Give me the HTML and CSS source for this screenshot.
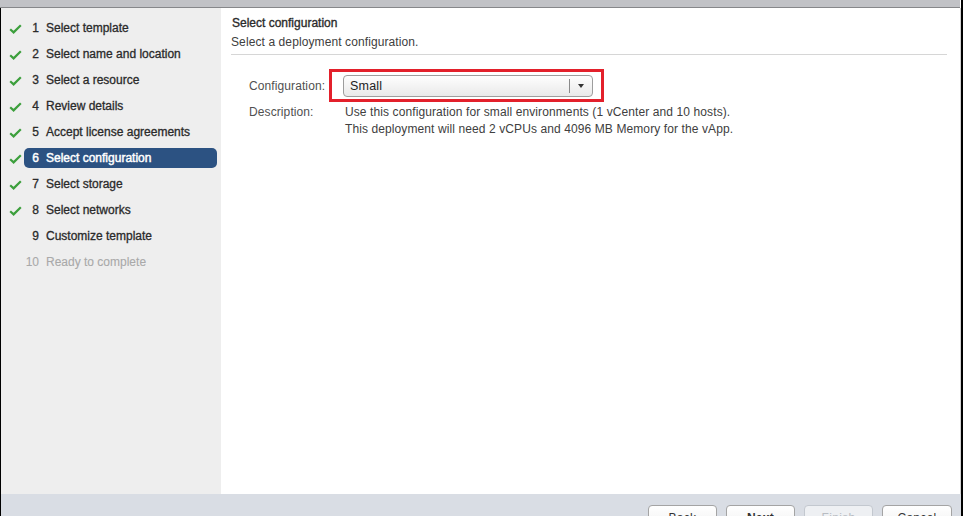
FILE: index.html
```html
<!DOCTYPE html>
<html lang="en">
<head>
<meta charset="utf-8">
<title>Deploy OVF Template - Select configuration</title>
<link rel="stylesheet" href="styles.css">
</head>
<body>
<div class="window">
  <div class="topbar"></div>
  <div class="main">
    <nav class="sidebar">
      <div class="row done"><span class="check"><svg width="13" height="10" viewBox="0 0 13 10"><path d="M1.2 5.2 L4.6 8.4 L11.8 1.2" fill="none" stroke="#3c9f3c" stroke-width="2.2"/></svg></span><div class="step"><span class="num">1</span><span class="label">Select template</span></div></div>
      <div class="row done"><span class="check"><svg width="13" height="10" viewBox="0 0 13 10"><path d="M1.2 5.2 L4.6 8.4 L11.8 1.2" fill="none" stroke="#3c9f3c" stroke-width="2.2"/></svg></span><div class="step"><span class="num">2</span><span class="label">Select name and location</span></div></div>
      <div class="row done"><span class="check"><svg width="13" height="10" viewBox="0 0 13 10"><path d="M1.2 5.2 L4.6 8.4 L11.8 1.2" fill="none" stroke="#3c9f3c" stroke-width="2.2"/></svg></span><div class="step"><span class="num">3</span><span class="label">Select a resource</span></div></div>
      <div class="row done"><span class="check"><svg width="13" height="10" viewBox="0 0 13 10"><path d="M1.2 5.2 L4.6 8.4 L11.8 1.2" fill="none" stroke="#3c9f3c" stroke-width="2.2"/></svg></span><div class="step"><span class="num">4</span><span class="label">Review details</span></div></div>
      <div class="row done"><span class="check"><svg width="13" height="10" viewBox="0 0 13 10"><path d="M1.2 5.2 L4.6 8.4 L11.8 1.2" fill="none" stroke="#3c9f3c" stroke-width="2.2"/></svg></span><div class="step"><span class="num">5</span><span class="label">Accept license agreements</span></div></div>
      <div class="row done"><span class="check"><svg width="13" height="10" viewBox="0 0 13 10"><path d="M1.2 5.2 L4.6 8.4 L11.8 1.2" fill="none" stroke="#3c9f3c" stroke-width="2.2"/></svg></span><div class="step active"><span class="num">6</span><span class="label">Select configuration</span></div></div>
      <div class="row done"><span class="check"><svg width="13" height="10" viewBox="0 0 13 10"><path d="M1.2 5.2 L4.6 8.4 L11.8 1.2" fill="none" stroke="#3c9f3c" stroke-width="2.2"/></svg></span><div class="step"><span class="num">7</span><span class="label">Select storage</span></div></div>
      <div class="row done"><span class="check"><svg width="13" height="10" viewBox="0 0 13 10"><path d="M1.2 5.2 L4.6 8.4 L11.8 1.2" fill="none" stroke="#3c9f3c" stroke-width="2.2"/></svg></span><div class="step"><span class="num">8</span><span class="label">Select networks</span></div></div>
      <div class="row"><span class="check"></span><div class="step"><span class="num">9</span><span class="label">Customize template</span></div></div>
      <div class="row"><span class="check"></span><div class="step disabled"><span class="num">10</span><span class="label">Ready to complete</span></div></div>
    </nav>
    <section class="content">
      <header class="header">
        <div class="title">Select configuration</div>
        <div class="subtitle">Select a deployment configuration.</div>
      </header>
      <div class="form">
        <div class="config-row">
          <span class="field-label config-label">Configuration:</span>
          <div class="highlight">
            <div class="select">
              <span class="select-value">Small</span>
              <span class="select-btn"><span class="arrow"></span></span>
            </div>
          </div>
        </div>
        <div class="desc-row">
          <span class="field-label desc-label">Description:</span>
          <div class="desc-text">
            <div>Use this configuration for small environments (1 vCenter and 10 hosts).</div>
            <div>This deployment will need 2 vCPUs and 4096 MB Memory for the vApp.</div>
          </div>
        </div>
      </div>
    </section>
  </div>
  <footer class="footer">
    <button class="btn">Back</button>
    <button class="btn primary">Next</button>
    <button class="btn" disabled>Finish</button>
    <button class="btn">Cancel</button>
  </footer>
</div>
</body>
</html>
```
FILE: styles.css
```css
* { box-sizing: border-box; }
html, body {
  margin: 0;
  padding: 0;
  width: 963px;
  height: 516px;
  overflow: hidden;
  background: #ffffff;
  font-family: "Liberation Sans", Arial, sans-serif;
  font-size: 12px;
}
.window {
  width: 963px;
  height: 516px;
  display: flex;
  flex-direction: column;
  border-right: 2px solid #000;
  background: #fff;
}
.topbar {
  height: 8px;
  flex: none;
  background: #c1c2c6;
  border-bottom: 1px solid #86878a;
  margin-right: 1px;
}
.main {
  flex: 1;
  display: flex;
  min-height: 0;
  border-left: 1px solid #000;
  border-right: 1px solid #d2d2d2;
}
.sidebar {
  width: 220px;
  flex: none;
  background: #eeeeee;
  padding-top: 10px;
  display: flex;
  flex-direction: column;
  gap: 6px;
}
.row {
  display: flex;
  align-items: center;
  height: 20px;
}
.check {
  width: 23px;
  flex: none;
  display: flex;
  align-items: center;
  padding-left: 8px;
  padding-top: 1px;
}
.check svg { display: block; }
.step {
  flex: 1;
  margin-right: 4px;
  height: 20px;
  display: flex;
  align-items: center;
  border-radius: 5px;
  color: #2a2a2a;
  -webkit-text-stroke: 0.3px currentColor;
  white-space: nowrap;
}
.num {
  width: 15px;
  text-align: right;
  flex: none;
}
.label { margin-left: 7px; }
.step.active {
  background: #2c5282;
  color: #ffffff;
  -webkit-text-stroke: 0.45px currentColor;
}
.step.disabled {
  color: #a9a9a9;
  -webkit-text-stroke: 0.1px currentColor;
}
.content {
  flex: 1;
  min-width: 0;
  background: #fff;
}
.header {
  margin: 0 13px 0 10px;
  padding-top: 7px;
  padding-bottom: 3px;
  border-bottom: 1px solid #d6d6d6;
}
.title {
  line-height: 16px;
  color: #2b2b2b;
  padding-left: 1px;
  -webkit-text-stroke: 0.35px currentColor;
}
.subtitle {
  margin-top: 2px;
  line-height: 18px;
  color: #404040;
  letter-spacing: 0.1px;
}
.form {
  padding-left: 28px;
  padding-top: 14px;
}
.field-label {
  color: #505050;
  letter-spacing: 0.1px;
  flex: none;
}
.config-row {
  display: flex;
  align-items: center;
}
.config-label { width: 80px; }
.highlight {
  width: 275px;
  border: 3px solid #e3202b;
  padding: 3px 8px 2px 11px;
}
.select {
  height: 22px;
  display: flex;
  align-items: center;
  border: 1px solid #9d9d9d;
  border-radius: 4px;
  background: linear-gradient(#fefefe, #e9e9e9);
}
.select-value {
  flex: 1;
  padding-left: 6px;
  color: #222;
  font-size: 12.5px;
  letter-spacing: 0.2px;
}
.select-btn {
  width: 23px;
  height: 14px;
  border-left: 1px solid #8a8a8a;
  display: flex;
  align-items: center;
  justify-content: center;
}
.arrow {
  width: 0;
  height: 0;
  border-left: 3.5px solid transparent;
  border-right: 3.5px solid transparent;
  border-top: 4px solid #333;
}
.desc-row {
  display: flex;
  line-height: 17px;
  margin-top: 2px;
}
.desc-label { width: 96px; }
.desc-text {
  color: #404040;
  letter-spacing: 0.1px;
}
.footer {
  height: 22px;
  flex: none;
  background: #d9dde4;
  border-left: 1px solid #000;
  display: flex;
  justify-content: flex-end;
  align-items: flex-start;
  gap: 9px;
  padding: 11px 9px 0 0;
  overflow: hidden;
}
.btn {
  width: 69px;
  height: 24px;
  flex: none;
  font-family: "Liberation Sans", Arial, sans-serif;
  font-size: 12px;
  color: #333;
  background: linear-gradient(#ffffff, #f0f0f0);
  border: 1px solid #a4a4a4;
  border-radius: 4px;
  padding: 2px 0 0;
  line-height: 14px;
  letter-spacing: 0.3px;
  text-align: center;
  margin: 0;
}
.btn.primary { font-weight: bold; }
.btn:disabled {
  color: #b8bcc2;
  background: #eef0f3;
  border-color: #c3c8cf;
}
.btn:last-child { width: 70px; }
```
